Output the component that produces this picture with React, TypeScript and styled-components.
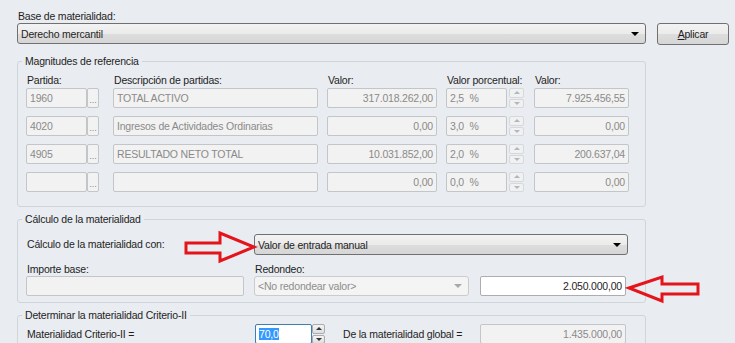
import styled, { createGlobalStyle } from "styled-components";

const GlobalStyle = createGlobalStyle`
  body {
    margin: 0;
    background: #e9ecf0;
    font-family: "Liberation Sans", Arial, sans-serif;
    font-size: 10.5px;
    letter-spacing: -0.2px;
    color: #1e1e1e;
  }
`;

type Partida = { code: string; desc: string; valor: string; pct: string; result: string };

const partidas: Partida[] = [
  { code: "1960", desc: "TOTAL ACTIVO", valor: "317.018.262,00", pct: "2,5", result: "7.925.456,55" },
  { code: "4020", desc: "Ingresos de Actividades Ordinarias", valor: "0,00", pct: "3,0", result: "0,00" },
  { code: "4905", desc: "RESULTADO NETO TOTAL", valor: "10.031.852,00", pct: "2,0", result: "200.637,04" },
  { code: "", desc: "", valor: "0,00", pct: "0,0", result: "0,00" },
];

const App = () => {
  return (
    <Page>
      <GlobalStyle />
      <Label>Base de materialidad:</Label>
      <TopRow>
        <Combo $w={629}>
          Derecho mercantil
          <Caret />
        </Combo>
        <Button>
          <u>A</u>plicar
        </Button>
      </TopRow>

      <Group $mt={10} $pt={6} $pb={14}>
        <Legend>Magnitudes de referencia</Legend>
        <HeaderGrid>
          <Label $span={2}>Partida:</Label>
          <Label>Descripción de partidas:</Label>
          <Label>Valor:</Label>
          <Label $span={2}>Valor porcentual:</Label>
          <Label>Valor:</Label>
        </HeaderGrid>
        <RowsGrid>
          {partidas.map((p, i) => (
            <Row key={i}>
              <Input $w={61}>{p.code}</Input>
              <Dots>...</Dots>
              <Input $w={205}>{p.desc}</Input>
              <Input $w={110} $right>
                {p.valor}
              </Input>
              <Input $w={61}>{p.pct}  %</Input>
              <Spinner $w={15}>
                <SpinBtn>
                  <Tri $up />
                </SpinBtn>
                <SpinBtn>
                  <Tri />
                </SpinBtn>
              </Spinner>
              <Input $w={95} $right>
                {p.result}
              </Input>
            </Row>
          ))}
        </RowsGrid>
      </Group>

      <Group $mt={6} $pt={8} $pb={6}>
        <Legend>Cálculo de la materialidad</Legend>
        <CalcGrid $rows="21px 21px 20px">
          <Label $center>Cálculo de la materialidad con:</Label>
          <Combo $w={374} $span={2}>
            Valor de entrada manual
            <Caret />
          </Combo>
          <Label $bottom>Importe base:</Label>
          <Label $bottom $span={2}>
            Redondeo:
          </Label>
          <Input $w={218} />
          <Combo $w={215} $disabled>
            {"<No redondear valor>"}
            <Caret $disabled />
          </Combo>
          <Input $w={146} $right $active>
            2.050.000,00
          </Input>
        </CalcGrid>
      </Group>

      <Group $mt={6} $pt={2} $pb={6}>
        <Legend>Determinar la materialidad Criterio-II</Legend>
        <CalcGrid $rows="20px">
          <Label $center>Materialidad Criterio-II =</Label>
          <Inline>
            <Input $w={57} $active $focus>
              <Selected>70,0</Selected>
            </Input>
            <Spinner $w={13} $active>
              <SpinBtn $active>
                <Tri $up $active />
              </SpinBtn>
              <SpinBtn $active>
                <Tri $active />
              </SpinBtn>
            </Spinner>
            <GlobalLabel>De la materialidad global =</GlobalLabel>
          </Inline>
          <Input $w={146} $right>
            1.435.000,00
          </Input>
        </CalcGrid>
      </Group>

      <ArrowMark style={{ left: 184, top: 229 }} width="74" height="36">
        <polygon points="2,14 36,14 36,4 70,18 36,32 36,24 2,24" />
      </ArrowMark>
      <ArrowMark style={{ left: 625, top: 273 }} width="78" height="32">
        <polygon points="4,15 37,4 37,11 73,11 73,21 37,21 37,28" />
      </ArrowMark>
    </Page>
  );
};

export default App;

const columns = "63px 24px 214px 119px 63px 25px 95px";

const Page = styled.div`
  position: relative;
  width: 735px;
  height: 343px;
  overflow: hidden;
  box-sizing: border-box;
  padding: 10px 0 0 17px;
`;

const Label = styled.div<{ $span?: number; $center?: boolean; $bottom?: boolean }>`
  line-height: 13px;
  padding-left: 1px;
  white-space: nowrap;
  grid-column: span ${({ $span }) => $span ?? 1};
  align-self: ${({ $center, $bottom }) => ($center ? "center" : $bottom ? "end" : "start")};
`;

const TopRow = styled.div`
  display: flex;
  align-items: flex-start;
  gap: 11px;
`;

const Combo = styled.div<{ $w: number; $span?: number; $disabled?: boolean }>`
  grid-column: span ${({ $span }) => $span ?? 1};
  width: ${({ $w }) => $w}px;
  height: ${({ $disabled }) => ($disabled ? 20 : 21)}px;
  box-sizing: border-box;
  display: flex;
  align-items: center;
  justify-content: space-between;
  padding: 0 6px 0 3px;
  border: 1px solid ${({ $disabled }) => ($disabled ? "#c9cbcd" : "#707070")};
  border-radius: 3px;
  color: ${({ $disabled }) => ($disabled ? "#8d8d8d" : "#1e1e1e")};
  background: ${({ $disabled }) =>
    $disabled ? "#f4f4f4" : "linear-gradient(to bottom, #f3f3f3 0%, #ebebeb 50%, #dddddd 51%, #d6d6d6 100%)"};
`;

const Caret = styled.span<{ $disabled?: boolean }>`
  width: 0;
  height: 0;
  border-left: 4px solid transparent;
  border-right: 4px solid transparent;
  border-top: 4px solid ${({ $disabled }) => ($disabled ? "#a8a8a8" : "#000")};
`;

const Button = styled.div`
  width: 72px;
  height: 22px;
  box-sizing: border-box;
  display: flex;
  align-items: center;
  justify-content: center;
  border: 1px solid #707070;
  border-radius: 3px;
  background: linear-gradient(to bottom, #f3f3f3 0%, #ebebeb 50%, #dddddd 51%, #d6d6d6 100%);
`;

const Group = styled.fieldset<{ $mt: number; $pt: number; $pb: number }>`
  width: 629px;
  min-width: 0;
  box-sizing: border-box;
  margin: ${({ $mt }) => $mt}px 0 0;
  padding: ${({ $pt }) => $pt}px 0 ${({ $pb }) => $pb}px 8px;
  border: 1px solid #d0d5da;
  border-radius: 3px;
`;

const Legend = styled.legend`
  line-height: 13px;
  padding: 0 3px;
  margin-left: -4px;
`;

const HeaderGrid = styled.div`
  display: grid;
  grid-template-columns: ${columns};
  height: 14px;
`;

const RowsGrid = styled.div`
  display: flex;
  flex-direction: column;
  gap: 8px;
`;

const Row = styled.div`
  display: grid;
  grid-template-columns: ${columns};
  height: 20px;
`;

const Input = styled.div<{ $w: number; $right?: boolean; $active?: boolean; $focus?: boolean }>`
  width: ${({ $w }) => $w}px;
  height: 20px;
  box-sizing: border-box;
  display: flex;
  align-items: center;
  justify-content: ${({ $right }) => ($right ? "flex-end" : "flex-start")};
  padding: 0 3px;
  white-space: pre;
  overflow: hidden;
  border: 1px solid ${({ $active, $focus }) => ($focus ? "#3c7fb1" : $active ? "#abadb3" : "#c3c6c9")};
  border-radius: 2px;
  background: ${({ $active }) => ($active ? "#ffffff" : "#f2f2f2")};
  color: ${({ $active }) => ($active ? "#1e1e1e" : "#8a8a8a")};
`;

const Dots = styled.div`
  width: 12px;
  height: 20px;
  margin-left: -2px;
  box-sizing: border-box;
  display: flex;
  align-items: flex-end;
  justify-content: center;
  padding-bottom: 3px;
  line-height: 8px;
  font-size: 9px;
  letter-spacing: 0;
  border: 1px solid #c3c6c9;
  border-radius: 2px;
  background: #f2f2f2;
  color: #8a8a8a;
`;

const Spinner = styled.div<{ $w: number; $active?: boolean }>`
  width: ${({ $w }) => $w}px;
  height: 20px;
  display: flex;
  flex-direction: column;
  gap: 1px;
`;

const SpinBtn = styled.div<{ $active?: boolean }>`
  flex: 1;
  display: flex;
  align-items: center;
  justify-content: center;
  border: 1px solid ${({ $active }) => ($active ? "#a9acb0" : "#d6d8da")};
  border-radius: 2px;
  background: ${({ $active }) => ($active ? "linear-gradient(#f4f4f4, #dedede)" : "#f0f1f2")};
`;

const Tri = styled.span<{ $up?: boolean; $active?: boolean }>`
  width: 0;
  height: 0;
  border-left: 3px solid transparent;
  border-right: 3px solid transparent;
  ${({ $up, $active }) =>
    $up
      ? `border-bottom: 3px solid ${$active ? "#333" : "#b4b6b8"};`
      : `border-top: 3px solid ${$active ? "#333" : "#b4b6b8"};`}
`;

const CalcGrid = styled.div<{ $rows: string }>`
  display: grid;
  grid-template-columns: 228px 226px 146px;
  grid-template-rows: ${({ $rows }) => $rows};
  align-items: start;
`;

const Inline = styled.div`
  display: flex;
  align-items: center;
  margin-left: 1px;
`;

const Selected = styled.span`
  background: #3399ff;
  color: #ffffff;
`;

const GlobalLabel = styled.span`
  margin-left: 18px;
  white-space: nowrap;
`;

const ArrowMark = styled.svg`
  position: absolute;
  fill: none;
  stroke: #e5141b;
  stroke-width: 3;
  stroke-linejoin: miter;
`;
